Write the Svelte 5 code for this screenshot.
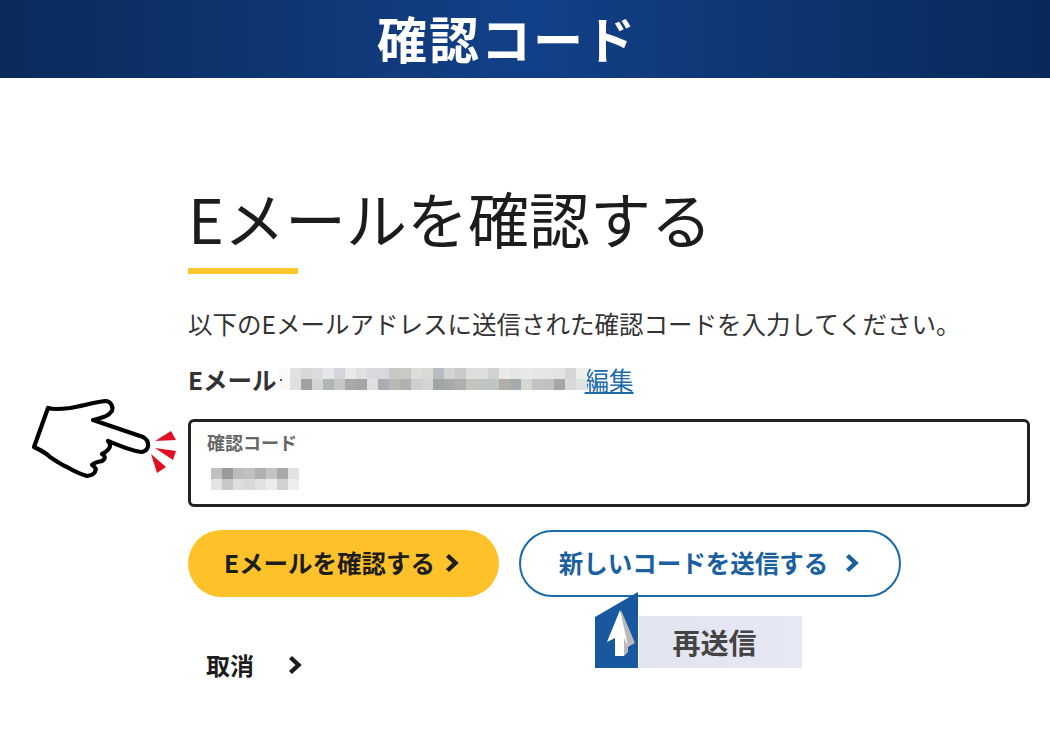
<script>
  const emailRows = [
    ['#fafafa','#e0e1e0','#d6d8d8','#dcdcd8','#e6e7e8','#d4d5da','#e8e9e8','#e0e0de','#d8d9db','#d8d9de','#c6c8c5','#c8cac6','#dcdddb','#d9dad6','#b6bcc0','#d4d4d4','#c8c9cc','#dedfdd','#dededd','#d0d3d0','#e8e9e8','#e4e6e5','#e8e9e8','#e6e7e6','#e4e5e4','#e2e3e2','#d4d5d4','#eceeed'],
    ['#f8f8f8','#e0e1de','#9fa3a3','#d4d6d2','#acb5b8','#c6c8c5','#a8aaaa','#a4a6a6','#dde0df','#acadb2','#b8bab4','#b0b2ae','#ccd0d0','#d3d5d0','#a0a4a4','#a8a9ab','#aeafb1','#c4c4bc','#c0c5c3','#bec5c2','#aeb0a8','#a4acad','#d6d8d4','#c2c4c2','#c0c2c0','#a6a6a6','#d8dbd8','#e0e2e2']
  ];
  const codeRows = [
    ['#c0c0c0','#9a9a9a','#bcbcbc','#c2c2c2','#b0b0b0','#c4c4c4','#a8a8a8','#e2e2e2'],
    ['#e4e4e4','#c8c8c8','#dedede','#d8d8d8','#e2e2e2','#ececec','#d2d2d2','#eeeeee']
  ];
</script>

<div class="page">
  <header class="banner"><h1>確認コード</h1></header>

  <main class="content">
    <h2>Eメールを確認する</h2>
    <div class="rule"></div>
    <p class="lead">以下のEメールアドレスに送信された確認コードを入力してください。</p>

    <div class="email">
      <strong>Eメール</strong>
      <span class="mosaic">
        {#each emailRows as row}
          <span class="mrow">
            {#each row as c}<i style="background:{c}"></i>{/each}
          </span>
        {/each}
        <span class="dot"></span>
      </span>
      <a href="#edit">編集</a>
    </div>

    <div class="field">
      <label for="code">確認コード</label>
      <span class="mosaic code" id="code">
        {#each codeRows as row}
          <span class="mrow">
            {#each row as c}<i style="background:{c}"></i>{/each}
          </span>
        {/each}
      </span>

      <svg class="hand" width="152" height="90" viewBox="30 395 152 90" aria-hidden="true">
        <path d="M48 409 C54 411 62 410 70 409 C82 407 95 403 105 402 C112 402 114 410 111 413 C108 418 100 419 93 421 L143 438 C150 442 150 451 142 453 C134 453 120 447 108 442 C113 447 108 452 102 455 C107 458 104 461 102 462 C98 463 93 464 92 466 C99 470 95 476 87 477 C80 475 72 471 67 468 C60 465 55 461 50 458 C45 453 40 451 34 448 Z" fill="#fff" stroke="#000" stroke-width="4.2" stroke-linejoin="round" stroke-linecap="round"/>
        <polygon points="155,442 171,432 176,441" fill="#e01022"/>
        <polygon points="155,449 176,452 173,461" fill="#e01022"/>
        <polygon points="151,455 166,468 157,474" fill="#e01022"/>
      </svg>
    </div>

    <div class="actions">
      <button class="primary">
        Eメールを確認する
        <svg class="chev" viewBox="0 0 14 20" aria-hidden="true"><path d="M2.5 2.5 10.5 10l-8 7.5" /></svg>
      </button>
      <button class="secondary">
        新しいコードを送信する
        <svg class="chev" viewBox="0 0 14 20" aria-hidden="true"><path d="M2.5 2.5 10.5 10l-8 7.5" /></svg>
      </button>

      <div class="callout">
        <span class="tab">
          <svg width="44" height="76" viewBox="0 0 44 76" aria-hidden="true">
            <path d="M0 25 L43 0 V76 H0 Z" fill="#18589f"/>
            <path d="M26 18 L40 51 L33 55 V60 L29 64 H20 Z" fill="#b9b9b9"/>
            <path d="M25 18 L12 50 L20 46 V64 L29 64 V46 L33 54 Z" fill="#fff" />
          </svg>
        </span>
        <span class="resend">再送信</span>
      </div>
    </div>

    <button class="cancel">
      取消
      <svg class="chev" viewBox="0 0 14 20" aria-hidden="true"><path d="M2.5 2.5 10.5 10l-8 7.5" /></svg>
    </button>
  </main>
</div>

<style>
  :global(body) {
    margin: 0;
    background: #fff;
  }
  .page {
    width: 1050px;
    height: 750px;
    overflow: hidden;
    font-family: "Noto Sans CJK JP", "Noto Sans", sans-serif;
    color: #1a1a1a;
  }
  .banner {
    height: 78px;
    display: flex;
    align-items: center;
    justify-content: center;
    padding-right: 36px;
    box-sizing: border-box;
    background: linear-gradient(90deg, #0a2a5a 0%, #124088 50%, #08295a 100%);
  }
  h1 {
    margin: -4px 0 0;
    font-size: 50px;
    line-height: 78px;
    font-weight: 700;
    color: #fff;
    letter-spacing: 2px;
  }
  .content {
    padding: 108px 20px 0 188px;
  }
  h2 {
    margin: 0;
    font-size: 61px;
    line-height: 64px;
    font-weight: 400;
    color: #1c1c1c;
  }
  .rule {
    width: 110px;
    height: 6px;
    margin-top: 18px;
    background: #fcc62d;
  }
  .lead {
    margin: 32px 0 0;
    font-size: 24.5px;
    line-height: 36px;
    color: #333;
  }
  .email {
    display: flex;
    align-items: center;
    height: 36px;
    margin-top: 19px;
    font-size: 24.5px;
  }
  .email strong {
    font-weight: 700;
    color: #333;
  }
  .mosaic {
    position: relative;
    display: flex;
    flex-direction: column;
    margin-left: 2px;
  }
  .dot {
    position: absolute;
    left: 1px;
    top: 11px;
    width: 2px;
    height: 2px;
    background: #555;
  }
  .mrow {
    display: flex;
    height: 11px;
  }
  .mrow i {
    width: 11px;
    display: block;
  }
  .email a {
    margin-left: -2px;
    color: #1c6bab;
    text-decoration: underline;
  }
  .field {
    position: relative;
    box-sizing: border-box;
    width: 842px;
    height: 88px;
    margin-top: 22px;
    padding: 8px 16px;
    border: 3px solid #222;
    border-radius: 6px;
  }
  .field label {
    display: block;
    font-size: 18px;
    line-height: 24px;
    font-weight: 700;
    color: #666;
  }
  .mosaic.code {
    margin: 14px 0 0 4px;
  }
  .hand {
    position: absolute;
    left: -161px;
    top: -28px;
    overflow: visible;
  }
  .actions {
    position: relative;
    display: flex;
    gap: 20px;
    margin-top: 23px;
  }
  button {
    font: inherit;
    display: inline-flex;
    align-items: center;
    justify-content: center;
    cursor: pointer;
    font-weight: 700;
  }
  .primary, .secondary {
    height: 67px;
    border-radius: 34px;
    font-size: 24.5px;
    line-height: 64px;
    padding-bottom: 2px;
  }
  .primary {
    width: 311px;
    background: #fdc129;
    border: 0;
    color: #1d1d1d;
    padding-right: 10px;
    gap: 10px;
  }
  .secondary {
    width: 382px;
    background: #fff;
    border: 2.5px solid #1a6aa8;
    color: #1a5f9e;
    box-sizing: border-box;
    gap: 17px;
    padding-right: 2px;
    padding-left: 0;
  }
  .chev {
    width: 14px;
    height: 20px;
    fill: none;
    stroke: currentColor;
    stroke-width: 4.4;
  }
  .callout {
    position: absolute;
    left: 407px;
    top: 62px;
    display: flex;
    align-items: flex-end;
  }
  .tab {
    display: block;
    height: 76px;
  }
  .tab svg { display: block; }
  .resend {
    display: flex;
    align-items: center;
    justify-content: center;
    width: 163px;
    height: 52px;
    font-size: 28px;
    font-weight: 700;
    color: #444;
    background: linear-gradient(90deg, #e2e4f0, #e6e8f3);
    padding-right: 12px;
    box-sizing: border-box;
  }
  .cancel {
    margin: 50px 0 0 18px;
    padding: 0;
    background: none;
    border: 0;
    font-size: 24px;
    gap: 34px;
    color: #1d1d1d;
  }
</style>
